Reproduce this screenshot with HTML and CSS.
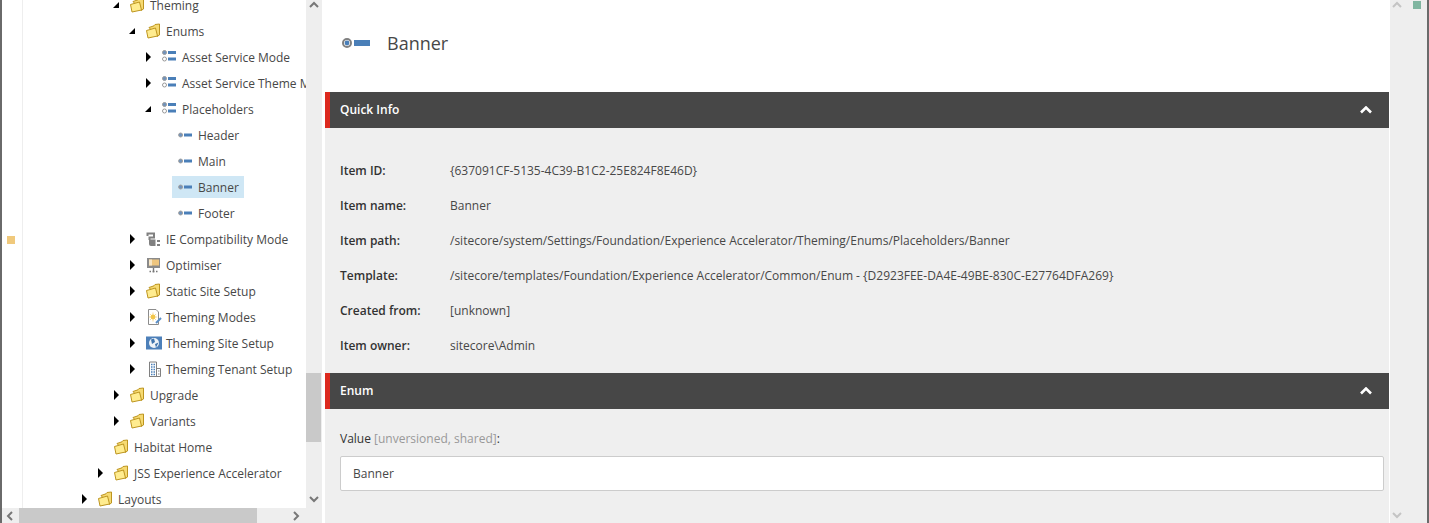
FILE: index.html
```html
<!DOCTYPE html>
<html lang="en">
<head>
    <meta charset="UTF-8">
    <title>Banner - Content Editor</title>
    <link rel="stylesheet" href="styles.css">
</head>
<body>
    <svg class="sprites" width="0" height="0">
        <symbol id="i-folder" viewBox="0 0 16 16">
            <path d="M3 4.5 L8 2.8 L9 1.5 L13.5 1 V12 L11 13.5 Z" fill="#f6da72" stroke="#bd951f"/>
            <path d="M0.5 7.5 L9.5 5 L11.5 13 L2 15 Z" fill="#ffec8f" stroke="#bd951f"/>
        </symbol>
        <symbol id="i-list" viewBox="0 0 16 16">
            <circle cx="2.5" cy="3.5" r="2" fill="#6f93bd" stroke="#999"/>
            <rect x="6" y="2" width="8" height="3" fill="#4a7fb8"/>
            <circle cx="2.5" cy="10" r="2" fill="#fff" stroke="#999"/>
            <rect x="6" y="8.5" width="8" height="3" fill="#4a7fb8"/>
        </symbol>
        <symbol id="i-item" viewBox="0 0 14 6">
            <circle cx="2.6" cy="3" r="2" fill="#6f93bd" stroke="#a0a0a0"/>
            <rect x="6" y="1.5" width="8" height="3" fill="#4a7fb8"/>
        </symbol>
        <symbol id="i-item-large" viewBox="0 0 28 12">
            <circle cx="5" cy="6" r="4" fill="#fff" stroke="#808080" stroke-width="2"/>
            <circle cx="5" cy="6" r="2.4" fill="#4a7fb8"/>
            <rect x="12" y="3" width="16" height="6" fill="#4a7fb8"/>
        </symbol>
        <symbol id="i-pipe" viewBox="0 0 16 16">
            <path d="M1.5 5 V2.5 H8 V6.5 H3.5 V9" fill="none" stroke="#808080" stroke-width="2"/>
            <path d="M3 8.5 H9.5 V15 H5 Q3 15 3 13 Z" fill="#808080"/>
            <rect x="11" y="9" width="3" height="2" fill="#808080"/>
            <rect x="11" y="13" width="3" height="2" fill="#808080"/>
        </symbol>
        <symbol id="i-monitor" viewBox="0 0 16 16">
            <rect x="1" y="1" width="13" height="10" fill="#8a8a8a"/>
            <rect x="3" y="2.5" width="10" height="6" fill="#efc67f"/>
            <rect x="3" y="2.5" width="3" height="6" fill="#f7e6c6"/>
            <path d="M7.5 11 V15.5 M3.5 14.5 H5 M6.5 14.5 H8.5 M10 14.5 H11.5" stroke="#777" stroke-width="1.4" fill="none"/>
        </symbol>
        <symbol id="i-page" viewBox="0 0 16 16">
            <path d="M2.5 0.5 H10 L12.5 3 V15.5 H2.5 Z" fill="#fff" stroke="#8c8c8c"/>
            <path d="M7 3.5 V12.5 M2.8 8 H11.2 M4 5 L10 11 M10 5 L4 11" stroke="#f7dc96"/>
            <circle cx="7" cy="8" r="2.4" fill="#f3c64a"/>
            <path d="M10 14 L15 9" stroke="#5b8fc7" stroke-width="2"/>
        </symbol>
        <symbol id="i-globe" viewBox="0 0 16 16">
            <rect width="16" height="13" y="1.5" fill="#4d80b9"/>
            <circle cx="8" cy="8" r="5" fill="#eef3f8"/>
            <path d="M5 4.5 L8 3.5 L9 7 L6 9 Z M9 9 L12.5 7.5 L10 12.5 Z" fill="#3f74ad"/>
        </symbol>
        <symbol id="i-building" viewBox="0 0 16 16">
            <path d="M3.5 15.5 V1 H10.5 V15.5 M10.5 7.5 H14.5 V15.5 H3" fill="#fff" stroke="#808080"/>
            <path d="M5 3.5 H9 M5 6 H9 M5 8.5 H9 M5 11 H9 M5 13.5 H9" stroke="#4a7fb8" stroke-width="1.6" stroke-dasharray="1.5 1"/>
            <path d="M12 10 H13.5 M12 13 H13.5" stroke="#8a8a8a"/>
        </symbol>
    </svg>

    <div class="edge"></div>

    <div class="sidebar">
        <div class="sidebar-top">
            <div class="gutter"><span class="gutter-mark"></span></div>
            <div class="tree">
                <div class="row lvl-2"><span class="arrow open"></span><a class="node"><svg class="icon"><use href="#i-folder"/></svg>Theming</a></div>
                <div class="row lvl-3"><span class="arrow open"></span><a class="node"><svg class="icon"><use href="#i-folder"/></svg>Enums</a></div>
                <div class="row lvl-4"><span class="arrow"></span><a class="node"><svg class="icon"><use href="#i-list"/></svg>Asset Service Mode</a></div>
                <div class="row lvl-4"><span class="arrow"></span><a class="node"><svg class="icon"><use href="#i-list"/></svg>Asset Service Theme Mode</a></div>
                <div class="row lvl-4"><span class="arrow open"></span><a class="node"><svg class="icon"><use href="#i-list"/></svg>Placeholders</a></div>
                <div class="row lvl-5"><span class="arrow none"></span><a class="node"><svg class="icon icon-item"><use href="#i-item"/></svg>Header</a></div>
                <div class="row lvl-5"><span class="arrow none"></span><a class="node"><svg class="icon icon-item"><use href="#i-item"/></svg>Main</a></div>
                <div class="row lvl-5"><span class="arrow none"></span><a class="node selected"><svg class="icon icon-item"><use href="#i-item"/></svg>Banner</a></div>
                <div class="row lvl-5"><span class="arrow none"></span><a class="node"><svg class="icon icon-item"><use href="#i-item"/></svg>Footer</a></div>
                <div class="row lvl-3"><span class="arrow"></span><a class="node"><svg class="icon"><use href="#i-pipe"/></svg>IE Compatibility Mode</a></div>
                <div class="row lvl-3"><span class="arrow"></span><a class="node"><svg class="icon"><use href="#i-monitor"/></svg>Optimiser</a></div>
                <div class="row lvl-3"><span class="arrow"></span><a class="node"><svg class="icon"><use href="#i-folder"/></svg>Static Site Setup</a></div>
                <div class="row lvl-3"><span class="arrow"></span><a class="node"><svg class="icon"><use href="#i-page"/></svg>Theming Modes</a></div>
                <div class="row lvl-3"><span class="arrow"></span><a class="node"><svg class="icon"><use href="#i-globe"/></svg>Theming Site Setup</a></div>
                <div class="row lvl-3"><span class="arrow"></span><a class="node"><svg class="icon"><use href="#i-building"/></svg>Theming Tenant Setup</a></div>
                <div class="row lvl-2"><span class="arrow"></span><a class="node"><svg class="icon"><use href="#i-folder"/></svg>Upgrade</a></div>
                <div class="row lvl-2"><span class="arrow"></span><a class="node"><svg class="icon"><use href="#i-folder"/></svg>Variants</a></div>
                <div class="row lvl-1"><span class="arrow none"></span><a class="node"><svg class="icon"><use href="#i-folder"/></svg>Habitat Home</a></div>
                <div class="row lvl-1"><span class="arrow"></span><a class="node"><svg class="icon"><use href="#i-folder"/></svg>JSS Experience Accelerator</a></div>
                <div class="row lvl-0"><span class="arrow"></span><a class="node"><svg class="icon"><use href="#i-folder"/></svg>Layouts</a></div>
            </div>
        </div>
        <div class="hscroll">
            <svg class="chev" viewBox="0 0 10 10"><path d="M7 1 L3 5 L7 9"/></svg>
            <div class="hscroll-thumb"></div>
            <svg class="chev" viewBox="0 0 10 10"><path d="M3 1 L7 5 L3 9"/></svg>
        </div>
    </div>

    <div class="vscroll">
        <svg class="chev" viewBox="0 0 10 10"><path d="M1 7 L5 3 L9 7"/></svg>
        <div class="vscroll-thumb"></div>
        <svg class="chev" viewBox="0 0 10 10"><path d="M1 3 L5 7 L9 3"/></svg>
    </div>

    <div class="main">
        <div class="title-bar">
            <svg class="title-icon"><use href="#i-item-large"/></svg>
            <h1>Banner</h1>
        </div>

        <div class="section-head">
            <span>Quick Info</span>
            <svg class="head-chev" viewBox="0 0 12 8"><path d="M1 6.5 L6 1.5 L11 6.5"/></svg>
        </div>
        <div class="quick-info">
            <div class="info-row"><b>Item ID:</b><span>{637091CF-5135-4C39-B1C2-25E824F8E46D}</span></div>
            <div class="info-row"><b>Item name:</b><span>Banner</span></div>
            <div class="info-row"><b>Item path:</b><span>/sitecore/system/Settings/Foundation/Experience Accelerator/Theming/Enums/Placeholders/Banner</span></div>
            <div class="info-row"><b>Template:</b><span>/sitecore/templates/Foundation/Experience Accelerator/Common/Enum - {D2923FEE-DA4E-49BE-830C-E27764DFA269}</span></div>
            <div class="info-row"><b>Created from:</b><span>[unknown]</span></div>
            <div class="info-row"><b>Item owner:</b><span>sitecore\Admin</span></div>
        </div>

        <div class="section-head">
            <span>Enum</span>
            <svg class="head-chev" viewBox="0 0 12 8"><path d="M1 6.5 L6 1.5 L11 6.5"/></svg>
        </div>
        <div class="field">
            <label>Value <span class="field-note">[unversioned, shared]</span>:</label>
            <div class="field-input">Banner</div>
        </div>
    </div>

    <div class="rail">
        <svg class="chev chev-light" viewBox="0 0 10 10"><path d="M1 7 L5 3 L9 7"/></svg>
        <span class="rail-mark"></span>
        <svg class="chev chev-light rail-down" viewBox="0 0 10 10"><path d="M1 3 L5 7 L9 3"/></svg>
    </div>
    <div class="edge"></div>
</body>
</html>
```

FILE: styles.css
```css
html, body {
    height: 100%;
}
body {
    margin: 0;
    display: flex;
    overflow: hidden;
    background: #fff;
    font-family: "Open Sans", Arial, sans-serif;
    font-size: 12px;
    color: #474747;
}
.sprites {
    position: absolute;
}
.edge {
    width: 2px;
    flex: none;
    background: #6a6a6a;
}

/* tree */
.sidebar {
    width: 304px;
    flex: none;
    display: flex;
    flex-direction: column;
}
.sidebar-top {
    flex: 1;
    min-height: 0;
    display: flex;
    overflow: hidden;
}
.gutter {
    width: 20px;
    flex: none;
    border-right: 1px solid #eee;
    padding-top: 236px;
}
.gutter-mark {
    display: block;
    width: 8px;
    height: 8px;
    margin-left: 5px;
    background: #f0c97c;
}
.tree {
    flex: 1;
    min-width: 0;
    margin-top: -8px;
    overflow: hidden;
}
.row {
    height: 26px;
    display: flex;
    align-items: center;
    white-space: nowrap;
}
.lvl-0 { padding-left: 59px; }
.lvl-1 { padding-left: 75px; }
.lvl-2 { padding-left: 91px; }
.lvl-3 { padding-left: 107px; }
.lvl-4 { padding-left: 123px; }
.lvl-5 { padding-left: 139px; }
.arrow {
    width: 10px;
    height: 10px;
    flex: none;
    box-sizing: border-box;
    border-left: 5px solid #000;
    border-top: 5px solid transparent;
    border-bottom: 5px solid transparent;
}
.arrow.open {
    width: 6px;
    height: 6px;
    margin-right: 5px;
    margin-left: -1px;
    border: 3px solid #000;
    border-left-color: transparent;
    border-top-color: transparent;
}
.arrow.none {
    border: 0;
}
.node {
    display: flex;
    align-items: center;
    height: 22px;
    padding: 0 6px;
}
.node.selected {
    background: #cfe7f5;
    padding-right: 5px;
}
.icon {
    width: 16px;
    height: 16px;
    margin-right: 4px;
    flex: none;
}
.icon-item {
    width: 14px;
    height: 6px;
    margin-right: 6px;
}

/* scrollbars */
.chev {
    width: 10px;
    height: 10px;
    flex: none;
}
.chev path {
    fill: none;
    stroke: #777;
    stroke-width: 2;
}
.chev-light path {
    stroke: #c4c4c4;
}
.hscroll {
    height: 15px;
    flex: none;
    display: flex;
    align-items: center;
    gap: 4px;
    background: #eee;
    padding: 0 5px 0 3px;
}
.hscroll-thumb {
    width: 238px;
    height: 100%;
    margin-right: auto;
    background: #c9c9c9;
}
.vscroll {
    width: 15px;
    flex: none;
    margin-right: 3px;
    display: flex;
    flex-direction: column;
    align-items: center;
    background: #eee;
    padding: 0 1px 19px 0;
}
.vscroll-thumb {
    width: 15px;
    height: 69px;
    margin-top: auto;
    margin-bottom: 52px;
    background: #c9c9c9;
}

/* main panel */
.main {
    width: 1064px;
    flex: none;
    background: #efefef;
    border-right: 1px solid #fff;
}
.title-bar {
    height: 92px;
    display: flex;
    align-items: center;
    padding-left: 17px;
    padding-bottom: 6px;
    box-sizing: border-box;
    background: #fff;
}
.title-icon {
    width: 28px;
    height: 12px;
    margin-right: 17px;
}
h1 {
    margin: 0;
    font-size: 18px;
    font-weight: 400;
}
.section-head {
    height: 36px;
    display: flex;
    align-items: center;
    justify-content: space-between;
    padding: 0 17px 0 10px;
    background: #474747;
    border-left: 5px solid #dc291e;
    color: #fff;
    font-weight: 600;
}
.section-head span {
    margin-bottom: 2px;
}
.head-chev {
    width: 12px;
    height: 8px;
}
.head-chev path {
    fill: none;
    stroke: #fff;
    stroke-width: 2.6;
}
.quick-info {
    padding: 25px 15px 10px;
}
.info-row {
    height: 35px;
    display: flex;
    align-items: center;
}
.info-row b {
    width: 110px;
    flex: none;
    font-weight: 600;
    color: #333;
}
.field {
    padding: 21px 5px 0 15px;
}
.field label {
    display: block;
    line-height: 18px;
    margin-bottom: 8px;
    color: #333;
}
.field-note {
    color: #999;
}
.field-input {
    height: 35px;
    box-sizing: border-box;
    padding: 0 12px;
    line-height: 34px;
    background: #fff;
    border: 1px solid #ccc;
    border-radius: 2px;
}

/* right rail */
.rail {
    flex: 1;
    display: flex;
    flex-direction: column;
    background: #eee;
    padding: 0 0 3px 2px;
    position: relative;
}
.rail-mark {
    position: absolute;
    top: 1px;
    left: 23px;
    width: 8px;
    height: 8px;
    background: #7fb5a0;
}
.rail-down {
    margin-top: auto;
}
```
